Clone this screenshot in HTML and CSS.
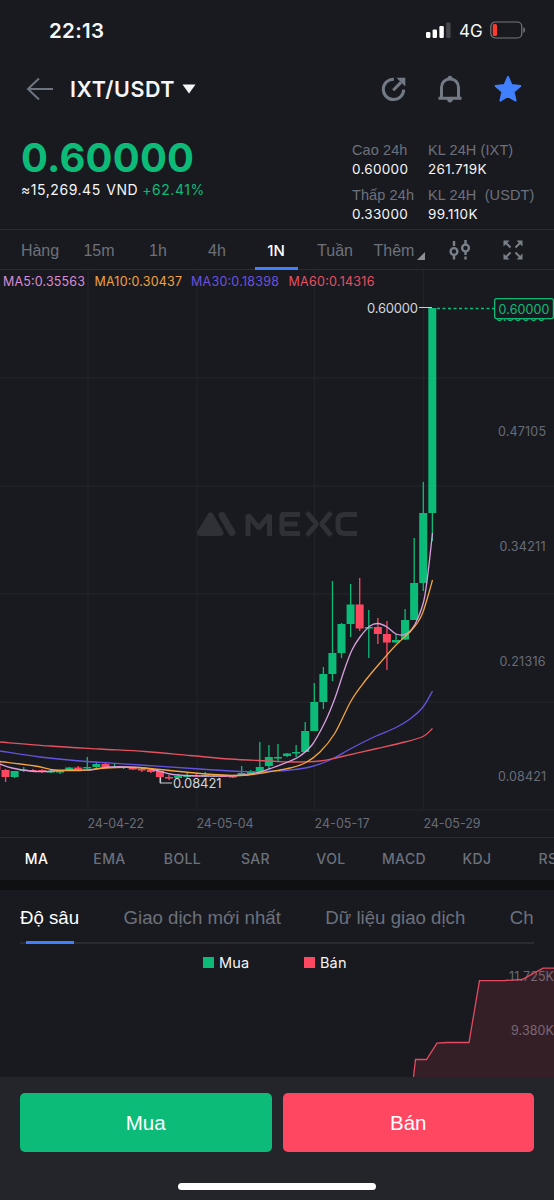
FILE: index.html
```html
<!DOCTYPE html>
<html lang="vi">
<head>
  <meta charset="UTF-8">
  <meta name="viewport" content="width=device-width, initial-scale=1.0">
  <title>IXT/USDT</title>
  <link rel="stylesheet" href="styles.css">
</head>
<body>
  <div class="status-bar">
    <span class="time">22:13</span>
    <svg class="signal" width="26" height="17" viewBox="0 0 26 17">
      <rect x="0" y="10" width="4.4" height="6" rx="1.2" fill="#fff"/>
      <rect x="6.6" y="7.4" width="4.4" height="8.6" rx="1.2" fill="#fff"/>
      <rect x="13.4" y="4" width="4.4" height="12" rx="1.2" fill="#fff"/>
      <rect x="20.2" y="0.6" width="4.4" height="15.4" rx="1.2" fill="#46474b"/>
    </svg>
    <span class="network">4G</span>
    <svg class="battery" width="36" height="18" viewBox="0 0 36 18">
      <rect x="0.8" y="1" width="31" height="16" rx="4.5" fill="none" stroke="#77787c" stroke-width="1.2"/>
      <rect x="2.8" y="3" width="4.2" height="12" rx="1.6" fill="#ff3b30"/>
      <path d="M33.4 6.2c2.2.8 2.2 4.8 0 5.6z" fill="#77787c"/>
    </svg>
  </div>

  <header class="nav">
    <svg class="back" width="28" height="24" viewBox="0 0 28 24">
      <path d="M27 12H2M13 1.5L2 12l11 10.5" fill="none" stroke="#6e7480" stroke-width="2"/>
    </svg>
    <h1>IXT/USDT</h1>
    <svg class="caret" width="14" height="10" viewBox="0 0 14 10"><path d="M0.5 0.5h13L7 9.5z" fill="#f5f6f8"/></svg>
    <div class="nav-icons">
      <svg width="26" height="28" viewBox="0 0 26 28">
        <path d="M13.900 4.2A10.2 10.2 0 1 0 23.700 14.6" fill="none" stroke="#737a86" stroke-width="3"/>
        <path d="M13.200 15.2L21 7.4" fill="none" stroke="#737a86" stroke-width="3"/>
        <path d="M16.500 2.8h8.8v8.8z" fill="#737a86"/>
      </svg>
      <svg width="26" height="28" viewBox="0 0 26 28">
        <path d="M4.5 23V12.5C4.5 7.5 8 4 13 4s8.500 3.500 8.500 8.500V23" fill="none" stroke="#737a86" stroke-width="3"/>
        <path d="M1.500 21.700h23v3h-23zM10 24.500h6c-.4 2-1.400 3-3 3s-2.600-1-3-3zM10.200 3.800c.3-2 1.300-3 2.800-3s2.500 1 2.800 3z" fill="#737a86"/>
      </svg>
      <svg width="28" height="28" viewBox="0 0 28 28">
        <path d="M14 2l3.500 8.100 8.800.8-6.700 5.800 2 8.900L14 21l-7.600 4.600 2-8.900-6.700-5.800 8.800-.8z" fill="#4080ff" stroke="#4080ff" stroke-width="2" stroke-linejoin="round"/>
      </svg>
    </div>
  </header>

  <section class="ticker">
    <div class="price-box">
      <div class="price">0.60000</div>
      <div class="sub-price"><span class="fiat">≈15,269.45 <span class="cur">VND</span></span><span class="change">+62.41%</span></div>
    </div>
    <dl class="stats">
      <div><dt>Cao 24h</dt><dd>0.60000</dd></div>
      <div><dt>KL 24H (IXT)</dt><dd>261.719K</dd></div>
      <div><dt>Thấp 24h</dt><dd>0.33000</dd></div>
      <div><dt>KL 24H&nbsp; (USDT)</dt><dd>99.110K</dd></div>
    </dl>
  </section>

  <nav class="intervals">
    <span>Hàng</span>
    <span>15m</span>
    <span>1h</span>
    <span>4h</span>
    <span class="active">1N</span>
    <span>Tuần</span>
    <span class="more">Thêm</span>
    <svg class="tool-indicator" width="22" height="20" viewBox="0 0 22 20" fill="none" stroke="#7a808a" stroke-width="2.400">
      <circle cx="5" cy="11.500" r="3.400"/>
      <path d="M5 1v5M5 15.500v4"/>
      <circle cx="16.500" cy="8" r="3.400"/>
      <path d="M16.500 0v4M16.500 12v3M16.500 16.500v3"/>
    </svg>
    <svg class="tool-expand" width="20" height="20" viewBox="0 0 20 20">
      <path d="M3 3l4.500 4.500M17 3l-4.500 4.500M3 17l4.500-4.500M17 17l-4.500-4.500" stroke="#7a808a" stroke-width="2"/>
      <path d="M.5.5H6.500L.5 6.500zM19.500.5V6.500L13.500 .5zM.5 19.500V13.500L6.500 19.500zM19.500 19.500H13.500l6-6z" fill="#7a808a"/>
    </svg>
  </nav>

  <svg class="chart" width="554" height="567" viewBox="0 270 554 567">
    <g class="grid">
      <path d="M88 270V810M197 270V810M314.500 270V810M423.500 270V810"/>
      <path d="M0 378H554M0 486H554M0 594H554M0 702H554M0 810H554"/>
    </g>
    <g class="watermark">
      <path d="M200 533L210.500 515.500L220.500 533z" stroke-width="6" stroke-linejoin="round"/>
      <path d="M222 515.500L232 532.500" stroke-width="7" stroke-linecap="round"/>
      <path d="M214.500 511.500L228 536" class="watermark-gap"/>
      <path class="wordmark" d="M248 536V515L258.800 528L269.500 515V536M300 514.500H282V533.500H300M282 524H297.500M307 512.500L316.500 524L307 535.500M331 512.500L321.500 524L331 535.500M357 514.500H345Q338 514.500 338 521V527Q338 533.500 345 533.500H357"/>
    </g>
    <g class="ma-values">
      <text x="3" y="286" textLength="82" fill="#d98ad6">MA5:0.35563</text>
      <text x="94.500" y="286" textLength="87.500" fill="#f0a23e">MA10:0.30437</text>
      <text x="191" y="286" textLength="88" fill="#6a52e0">MA30:0.18398</text>
      <text x="288.500" y="286" textLength="86" fill="#e65062">MA60:0.14316</text>
    </g>
    <g id="candles"></g>
    <g id="averages"></g>
    <path d="M437 308.500H495" stroke="#0dbb79" stroke-width="1.300" stroke-dasharray="3 2.500"/>
    <path d="M419 307.500H432M160.500 777V783H172" fill="none" stroke="#c9cbd0" stroke-width="1.200"/>
    <g class="marks">
      <text x="367" y="313" textLength="51">0.60000</text>
      <text x="173" y="788" textLength="48.500">0.08421</text>
    </g>
    <g class="axis">
      <text class="up" x="495.500" y="321" textLength="50">0.60000</text>
      <rect x="494.600" y="298.600" width="58.800" height="20" rx="2" fill="#191a1f" stroke="#0dbb79" stroke-width="1.300"/>
      <text class="up" x="498.500" y="313.700" textLength="51">0.60000</text>
      <text x="498" y="435.500" textLength="48">0.47105</text>
      <text x="499.500" y="550.500" textLength="46">0.34211</text>
      <text x="499.500" y="665.500" textLength="46">0.21316</text>
      <text x="498" y="780.500" textLength="48">0.08421</text>
      <text x="87.500" y="828" textLength="56.500">24-04-22</text>
      <text x="196.500" y="828" textLength="57">24-05-04</text>
      <text x="314.500" y="828" textLength="55">24-05-17</text>
      <text x="423.500" y="828" textLength="57">24-05-29</text>
    </g>
  </svg>

  <nav class="indicators">
    <span class="active">MA</span>
    <span>EMA</span>
    <span>BOLL</span>
    <span>SAR</span>
    <i class="divider"></i>
    <span>VOL</span>
    <span>MACD</span>
    <span>KDJ</span>
    <span>RSI</span>
  </nav>

  <section class="depth">
    <nav class="depth-tabs">
      <span class="active">Độ sâu</span>
      <span>Giao dịch mới nhất</span>
      <span>Dữ liệu giao dịch</span>
      <span>Ch</span>
    </nav>
    <div class="legend">
      <span class="buy">Mua</span>
      <span class="sell">Bán</span>
    </div>
    <svg class="depth-chart" width="554" height="113" viewBox="0 964 554 113">
      <g class="axis">
        <text x="509" y="981" textLength="45">11.725K</text>
        <text x="511" y="1034.500" textLength="43">9.380K</text>
      </g>
      <path d="M413.500 1077L415.500 1059.500H426.500L437 1043.200L447 1042.500H469L479.500 980.700L505 980.500L522 979.500L543 968.200H556V1080H413z" fill="#ff4761" fill-opacity=".12" stroke="#e44a62" stroke-width="1.300"/>
    </svg>
  </section>

  <footer class="trade-bar">
    <div class="buttons">
      <button class="btn-buy">Mua</button>
      <button class="btn-sell">Bán</button>
    </div>
    <div class="home-indicator"></div>
  </footer>

  <script src="script.js"></script>
</body>
</html>
```
FILE: styles.css
```css
* {
  box-sizing: border-box;
  margin: 0;
  padding: 0;
}

body {
  width: 554px;
  height: 1200px;
  overflow: hidden;
  display: flex;
  flex-direction: column;
  background: #191a1f;
  color: #f5f6f8;
  font-family: Inter, "Liberation Sans", sans-serif;
}

svg {
  display: block;
  flex-shrink: 0;
}

/* status bar */
.status-bar {
  height: 60px;
  padding: 0 28px 0 49px;
  display: flex;
  align-items: center;
}

.time {
  margin-top: 1px;
  font-size: 20.5px;
  font-weight: 600;
  letter-spacing: 0.3px;
}

.signal {
  margin-left: auto;
}

.network {
  width: 24px;
  margin: 1px 7px 0 7px;
  font-size: 17px;
  font-weight: 400;
}

/* header */
.nav {
  height: 58px;
  padding: 0 32px 0 26px;
  display: flex;
  align-items: center;
}

.nav h1 {
  margin-left: 16px;
  font-size: 21.5px;
  font-weight: 600;
  letter-spacing: 0.55px;
}

.caret {
  margin-left: 7px;
}

.nav-icons {
  margin-left: auto;
  display: flex;
  gap: 31px;
}

/* price */
.ticker {
  height: 112px;
  padding: 19px 0 0 21px;
  display: flex;
  border-bottom: 1px solid #2b2c32;
}

.price-box {
  width: 331.5px;
}

.price {
  font-size: 40px;
  line-height: 42px;
  font-weight: 700;
  letter-spacing: 0.2px;
  color: #0dbb79;
}

.sub-price {
  margin-top: 2px;
  font-size: 14px;
  line-height: 18px;
  letter-spacing: 0.55px;
}

.cur {
  margin-left: 1px;
}

.change {
  margin-left: 4px;
  color: #0dbb79;
}

.stats {
  display: grid;
  grid-template-columns: 76px 126px;
  grid-auto-rows: 44.5px;
  padding-top: 4px;
}

.stats dt {
  font: 14.5px/18px "Liberation Sans", Arial, sans-serif;
  letter-spacing: 0.1px;
  color: #6c717c;
  white-space: nowrap;
}

.stats dd {
  font-size: 13.5px;
  line-height: 20px;
  letter-spacing: 0.3px;
}

/* interval tabs */
.intervals {
  height: 40px;
  padding-left: 10.5px;
  display: flex;
  align-items: center;
  border-bottom: 1px solid #2b2c32;
  font: 16px "Liberation Sans", Arial, sans-serif;
  color: #6c717c;
}

.intervals span {
  position: relative;
  width: 59px;
  padding-top: 1px;
  line-height: 39px;
  text-align: center;
}

.intervals .active {
  color: #fff;
  font-family: Inter, sans-serif;
  font-size: 15px;
  font-weight: 500;
}

.intervals .active::after {
  content: "";
  position: absolute;
  left: 8px;
  bottom: 0;
  width: 43px;
  height: 3px;
  background: #4080ff;
}

.intervals .more::after {
  content: "";
  position: absolute;
  right: -1px;
  bottom: 10px;
  border-left: 8px solid transparent;
  border-bottom: 8px solid #8b8f98;
}

.tool-indicator {
  margin-left: 25px;
}

.tool-expand {
  margin-left: 32px;
}

/* chart */
.chart text,
.depth-chart text {
  font-family: Inter, sans-serif;
  font-size: 12.5px;
}

.grid {
  fill: none;
  stroke: #222328;
  stroke-width: 1.3;
}

.watermark {
  fill: #303136;
  stroke: #303136;
}

.watermark-gap {
  stroke: #191a1f;
  stroke-width: 1.2;
}

.wordmark {
  fill: none;
  stroke-width: 5;
  stroke-linejoin: bevel;
}

.marks text {
  font-size: 13px;
  fill: #d4d6da;
}

.axis text {
  fill: #686c77;
}

.axis .up {
  fill: #0dbb79;
}

.average {
  fill: none;
  stroke-width: 1.3;
}

/* indicator tabs */
.indicators {
  height: 43px;
  padding-bottom: 2px;
  display: flex;
  align-items: center;
  overflow: hidden;
  border-top: 1px solid #2b2c32;
  font-size: 14px;
  font-weight: 500;
  letter-spacing: 0.4px;
  color: #6c717c;
}

.indicators span {
  flex: 0 0 73px;
  text-align: center;
}

.indicators .active {
  color: #fff;
}

.divider {
  width: 1px;
  height: 22px;
  margin: 0 1.5px 0 1px;
  background: #33353b;
}

/* depth */
.depth {
  height: 197px;
  border-top: 10px solid #0f1012;
}

.depth-tabs {
  height: 54px;
  margin: 0 20px;
  display: flex;
  gap: 44.5px;
  overflow: hidden;
  background: linear-gradient(#2a2b31, #2a2b31) bottom / 100% 2px no-repeat;
  font: 18.65px/55px "Liberation Sans", Arial, sans-serif;
  color: #6c717c;
  white-space: nowrap;
}

.depth-tabs span {
  position: relative;
  height: 54px;
  flex-shrink: 0;
}

.depth-tabs .active {
  color: #fff;
}

.depth-tabs .active::after {
  content: "";
  position: absolute;
  left: 6px;
  bottom: 0;
  width: 48px;
  height: 3px;
  background: #4080ff;
}

.legend {
  height: 18px;
  margin-top: 10px;
  padding-left: 203px;
  display: flex;
  gap: 54.5px;
  font-size: 14.5px;
  line-height: 18px;
  letter-spacing: 0.2px;
}

.legend span::before {
  content: "";
  display: inline-block;
  width: 11px;
  height: 11px;
  margin-right: 5px;
}

.legend .buy::before {
  background: #0dbb79;
}

.legend .sell::before {
  background: #ff4761;
}

.depth-chart {
  margin-top: -8px;
}

/* bottom */
.trade-bar {
  height: 123px;
  padding: 16px 20px 0;
  background: #24252b;
}

.buttons {
  display: flex;
  gap: 11px;
}

.buttons button {
  flex: 1;
  height: 59px;
  border: none;
  border-radius: 5px;
  font: 20.5px "Liberation Sans", Arial, sans-serif;
  color: #fff;
}

.btn-buy {
  background: #0dbb79;
}

.btn-sell {
  background: #ff4761;
}

.home-indicator {
  width: 198px;
  height: 7px;
  margin: 31px auto 0;
  border-radius: 4px;
  background: #fff;
}
```
FILE: script.js
```js
const UP = '#0dbb79';
const DOWN = '#ff4761';
const STEP = 9.08;
const LAST_X = 432.3;

// [direction, body top, body bottom, wick top, wick bottom], newest first
const candles = [
  [1, 308, 513, 308, 541],
  [1, 513, 583, 482, 591],
  [1, 583, 620, 538, 620],
  [1, 620, 639.5, 609, 640],
  [1, 640, 642.5, 634, 643],
  [0, 634, 642.5, 621, 670],
  [0, 627, 634, 618, 644],
  [1, 627, 628.5, 610, 658],
  [0, 604.5, 628.5, 578, 631],
  [1, 604.5, 624, 584, 637],
  [1, 624, 653, 623, 658],
  [1, 653, 674, 581, 681],
  [1, 674, 702, 667, 709],
  [1, 702, 731, 683, 731],
  [1, 731, 752, 722, 752],
  [1, 752, 753.5, 745, 757],
  [1, 753.5, 756, 753, 757],
  [1, 757, 758.5, 744, 761],
  [1, 757, 766, 745, 769],
  [1, 767, 772, 742, 772],
  [1, 772, 774, 770, 775],
  [1, 773, 775, 766, 776],
  [0, 776, 777.5, 776, 778],
  [0, 775.5, 777, 775, 777],
  [1, 775.5, 776.5, 775, 777],
  [1, 775, 776.5, 772, 777],
  [0, 775.5, 776.5, 774, 777],
  [1, 775.5, 777, 772, 778],
  [1, 776, 778, 775, 778],
  [0, 777, 778.5, 775, 780],
  [0, 771, 777, 771, 783],
  [0, 769.5, 772, 769, 773],
  [0, 769, 770.5, 768, 772],
  [0, 768, 769.5, 767, 770],
  [1, 767, 768, 767, 769],
  [1, 767, 768, 763, 768],
  [0, 764, 767, 762, 768],
  [1, 764, 767, 763, 768],
  [1, 767, 768.5, 757, 769],
  [0, 767.5, 769.5, 766, 770],
  [1, 767.5, 769.5, 767, 770],
  [1, 771, 772.5, 770, 774],
  [1, 771, 772.5, 770, 773],
  [0, 770, 772, 769, 773],
  [0, 770, 771.5, 769, 772],
  [1, 769.5, 771, 767, 772],
  [1, 771, 777, 771, 778],
  [0, 770, 777, 769, 782],
  [0, 762, 770, 761, 770]
];

const averages = [
  ['#6254e0', [[0, 751], [40, 757], [80, 761], [140, 765], [200, 769], [240, 771.5], [270, 771.2], [290, 770], [310, 767], [330, 760], [352, 748], [375, 736.5], [395, 728], [410, 719], [423, 707], [432.5, 691]]],
  ['#e2525f', [[0, 742], [50, 746], [100, 749], [145, 751.5], [190, 755.5], [230, 759], [270, 761], [290, 762], [320, 761], [340, 757], [375, 749], [405, 742], [423, 736.5], [432.5, 728.5]]],
  ['#d9a0de', [[0, 764], [12, 768], [30, 771], [45, 771.5], [70, 770], [90, 770], [110, 767], [140, 767.5], [155, 770], [170, 774], [185, 775.5], [200, 776], [225, 776], [245, 775], [260, 772], [272, 768], [290, 761], [300, 756], [312, 745], [325, 722], [335, 698], [345, 668], [352, 650], [360, 637], [370, 626], [378, 623.5], [387, 627], [396, 634], [405, 634.5], [412, 629], [418, 618], [424, 600], [428, 573], [432.5, 533]]],
  ['#f2a541', [[0, 761.5], [35, 766], [55, 770], [80, 770.5], [105, 768], [135, 767.5], [160, 769.5], [200, 773.5], [240, 775.5], [262, 773], [280, 770], [290, 768], [305, 763], [320, 752], [335, 733], [351, 701], [365, 681], [380, 663], [396, 645], [410, 632], [418, 622], [423, 612], [428, 596], [432.5, 580]]]
];

// smooth curve through every point
function curve(points) {
  let d = `M${points[0]}`;
  for (let i = 0; i < points.length - 1; i++) {
    const a = points[i - 1] || points[i];
    const b = points[i];
    const c = points[i + 1];
    const e = points[i + 2] || c;
    d += `C${b[0] + (c[0] - a[0]) / 6} ${b[1] + (c[1] - a[1]) / 6} ${c[0] - (e[0] - b[0]) / 6} ${c[1] - (e[1] - b[1]) / 6} ${c[0]} ${c[1]}`;
  }
  return d;
}

document.getElementById('candles').innerHTML = candles.map(([up, top, bottom, high, low], i) => {
  const x = LAST_X - i * STEP;
  const color = up ? UP : DOWN;
  return `<rect x="${x - 4}" y="${top}" width="8" height="${bottom - top}" fill="${color}"/>` +
    `<rect x="${x - 0.6}" y="${high}" width="1.3" height="${low - high}" fill="${color}"/>`;
}).join('');

document.getElementById('averages').innerHTML = averages.map(([color, points]) =>
  `<path class="average" d="${curve(points)}" stroke="${color}"/>`
).join('');
```
